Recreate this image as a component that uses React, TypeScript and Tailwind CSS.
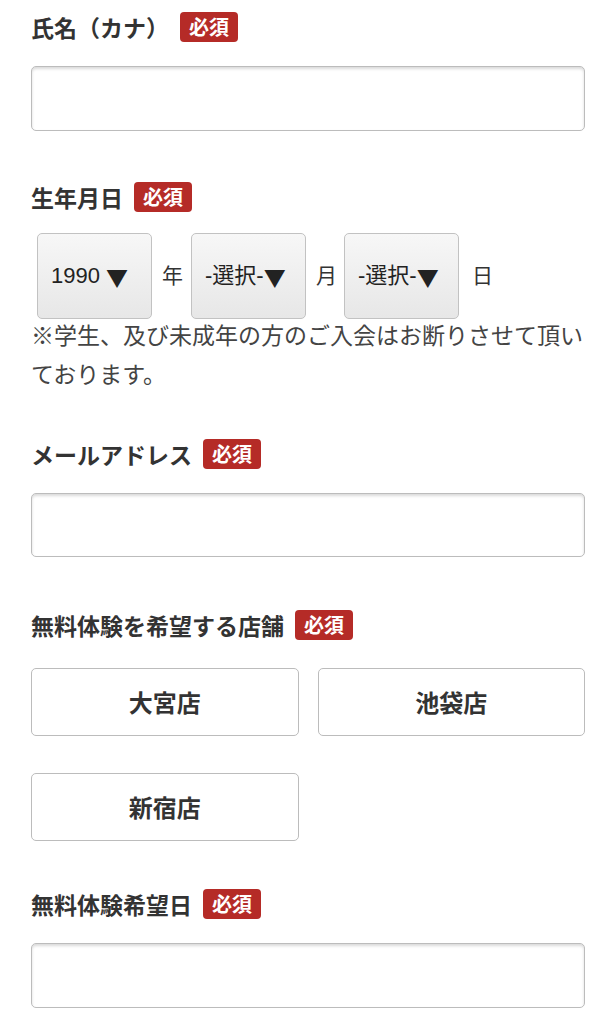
const jp = { fontFamily: '"Noto Sans CJK JP", "Noto Sans", sans-serif' };

function Badge() {
  return (
    <span className="ml-[11px] inline-flex h-[30px] items-center rounded-[4px] bg-[#b52b27] px-[9px] text-[20px] font-bold leading-none text-white">
      必須
    </span>
  );
}

function Label({ text }: { text: string }) {
  return (
    <div className="flex h-[30px] items-center text-[23px] font-bold leading-none text-[#333]">
      <span>{text}</span>
      <Badge />
    </div>
  );
}

function TextBox({ className = "" }: { className?: string }) {
  return (
    <input
      type="text"
      className={`block w-full rounded-[5px] border border-[#bcbcbc] bg-white shadow-[inset_0_2px_3px_rgba(0,0,0,0.15)] outline-none ${className}`}
    />
  );
}

function SelectBox({ value, spaced = false }: { value: string; spaced?: boolean }) {
  return (
    <div
      className="flex h-[86px] w-[115px] shrink-0 items-center rounded-[5px] border border-[#c2c2c2] bg-gradient-to-b from-[#f7f7f7] to-[#e7e7e7] pl-[13px] text-[22px] leading-none text-[#222]"
      style={{ fontFamily: '"Liberation Sans", "Noto Sans CJK JP", sans-serif' }}
    >
      <span>{value}</span>
      <span
        className={spaced ? "ml-[6px]" : ""}
        style={{ fontFamily: '"Noto Sans CJK JP", sans-serif' }}
      >
        ▼
      </span>
    </div>
  );
}

function Unit({ text }: { text: string }) {
  return <span className="text-[21px] leading-none text-[#333]">{text}</span>;
}

function ShopButton({ name }: { name: string }) {
  return (
    <button className="flex h-[68px] items-center justify-center rounded-[5px] border border-[#bcbcbc] bg-white text-[24px] font-bold text-[#333]">
      {name}
    </button>
  );
}

export default function App() {
  return (
    <div className="min-h-[1024px] bg-white px-[31px] pt-[12px]" style={jp}>
      {/* 氏名 */}
      <Label text="氏名（カナ）" />
      <TextBox className="mt-[24px] h-[65px]" />

      {/* 生年月日 */}
      <div className="mt-[51px]">
        <Label text="生年月日" />
      </div>
      <div className="mt-[21px] flex items-center pl-[6px]">
        <SelectBox value="1990" spaced />
        <span className="ml-[10px] mr-[8px]">
          <Unit text="年" />
        </span>
        <SelectBox value="-選択-" />
        <span className="ml-[10px] mr-[7px]">
          <Unit text="月" />
        </span>
        <SelectBox value="-選択-" />
        <span className="ml-[13px]">
          <Unit text="日" />
        </span>
      </div>
      <p className="-mt-[4px] text-[23px] leading-[39px] text-[#444]">
        ※学生、及び未成年の方のご入会はお断りさせて頂いております。
      </p>

      {/* メールアドレス */}
      <div className="mt-[46px]">
        <Label text="メールアドレス" />
      </div>
      <TextBox className="mt-[24px] h-[64px]" />

      {/* 店舗 */}
      <div className="mt-[53px]">
        <Label text="無料体験を希望する店舗" />
      </div>
      <div className="mt-[28px] grid grid-cols-2 gap-x-[19px] gap-y-[37px]">
        <ShopButton name="大宮店" />
        <ShopButton name="池袋店" />
        <ShopButton name="新宿店" />
      </div>

      {/* 希望日 */}
      <div className="mt-[48px]">
        <Label text="無料体験希望日" />
      </div>
      <TextBox className="mt-[24px] h-[65px]" />
    </div>
  );
}
